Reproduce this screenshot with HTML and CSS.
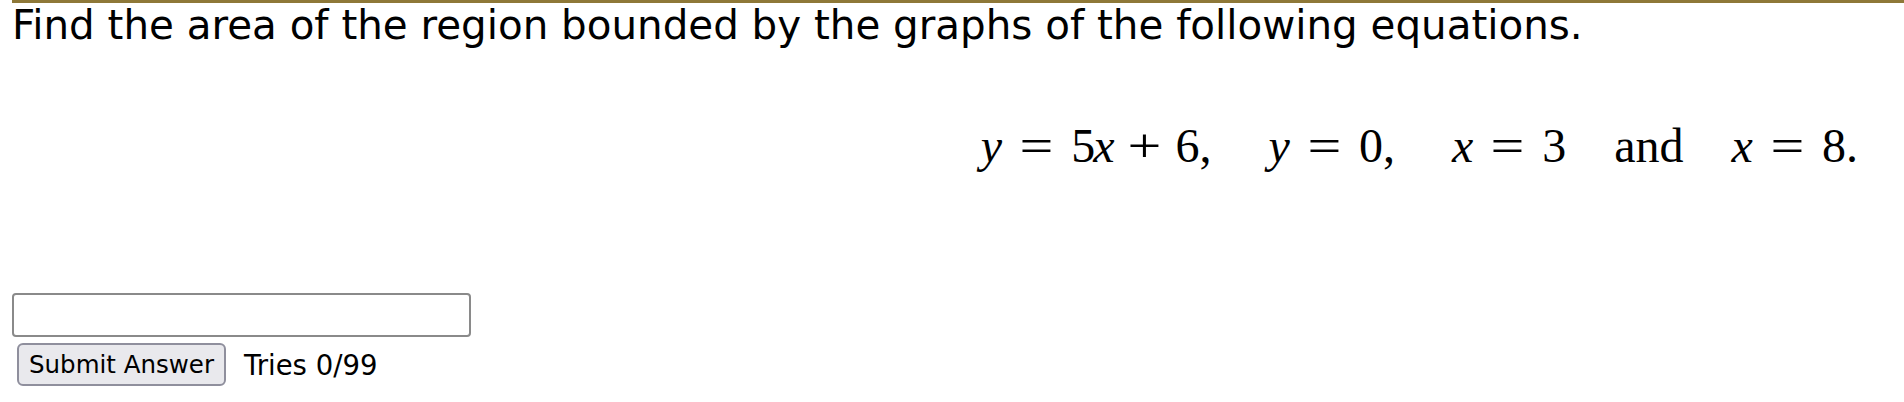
FILE: index.html
```html
<!DOCTYPE html>
<html>
<head>
<meta charset="utf-8">
<link rel="stylesheet" href="styles.css">
</head>
<body>
<div class="topbar"></div>
<div class="page">
  <p class="question">Find the area of the region bounded by the graphs of the following equations.</p>
  <div class="equations">
    <span class="eq comma"><i class="mi">y</i><span class="rel">=</span><span class="mn">5</span><i class="mi tight">x</i><span class="bin">+</span><span class="mn">6</span><span class="mp">,</span></span>
    <span class="eq comma"><i class="mi">y</i><span class="rel">=</span><span class="mn">0</span><span class="mp">,</span></span>
    <span class="eq"><i class="mi">x</i><span class="rel">=</span><span class="mn">3</span></span>
    <span class="eq">and</span>
    <span class="eq"><i class="mi">x</i><span class="rel">=</span><span class="mn">8</span><span class="mp">.</span></span>
  </div>
  <div class="answer">
    <input class="answer-input" type="text">
    <div class="submit-row">
      <button class="submit-btn" type="button">Submit Answer</button>
      <span class="tries">Tries 0/99</span>
    </div>
  </div>
</div>
</body>
</html>
```
FILE: styles.css
```css
html, body {
  margin: 0;
  padding: 0;
  background: #ffffff;
}
.topbar {
  margin-left: 12px;
  height: 3px;
  background: #8e7838;
}
.page {
  padding-left: 12px;
  font-family: "DejaVu Sans", Verdana, sans-serif;
  color: #000;
}
.question {
  margin: 2px 0 0 0;
  font-size: 40.4px;
  line-height: 40px;
  white-space: nowrap;
}
.equations {
  display: flex;
  justify-content: flex-end;
  gap: 48px;
  padding-right: 46px;
  margin-top: 73px;
  font-family: "Liberation Serif", "Times New Roman", serif;
  font-size: 48px;
  line-height: 56px;
  white-space: nowrap;
}
.eq {
  display: flex;
  align-items: baseline;
}
.eq.comma {
  margin-right: 9px;
}
.mi {
  font-style: italic;
}
.mi.tight {
  margin-left: -2px;
}
.rel {
  display: inline-block;
  margin: 0 21px;
  transform: scaleX(1.25);
}
.bin {
  display: inline-block;
  margin: 0 17px;
  transform: scaleX(1.25);
}
.answer {
  margin-top: 119px;
  display: flex;
  flex-direction: column;
  gap: 6px;
}
.answer-input {
  box-sizing: border-box;
  width: 459px;
  height: 44px;
  margin: 0;
  border: 2px solid #8a8a8a;
  border-radius: 4px;
  background: #fff;
}
.submit-row {
  display: flex;
  align-items: center;
  gap: 18px;
  padding-left: 5px;
}
.submit-btn {
  box-sizing: border-box;
  height: 43px;
  width: 209px;
  padding: 0;
  font-family: "DejaVu Sans", Verdana, sans-serif;
  font-size: 24.5px;
  color: #000;
  background: #e9e9ed;
  border: 2px solid #8f8f9d;
  border-radius: 6px;
}
.tries {
  font-size: 27.5px;
}
```
